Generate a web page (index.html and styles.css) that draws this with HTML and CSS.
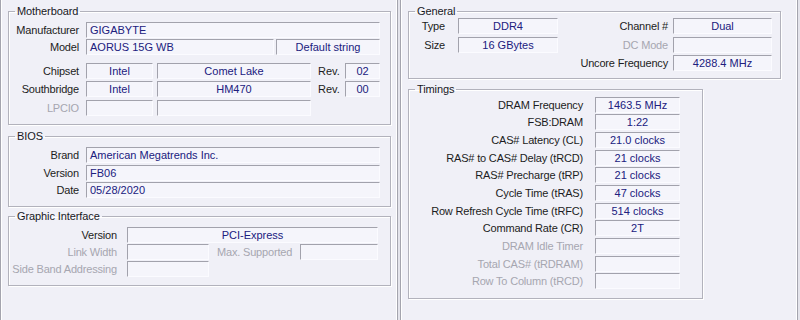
FILE: index.html
```html
<!DOCTYPE html>
<html lang="en">
<head>
  <meta charset="UTF-8">
  <title>Mainboard / Memory</title>
  <link rel="stylesheet" href="styles.css">
</head>
<body>
  <div class="screen">

    <!-- Mainboard tab -->
    <div class="window win-left">
      <fieldset class="group mb">
        <legend>Motherboard</legend>
        <div class="row">
          <span class="lbl">Manufacturer</span>
          <span class="fld txt-left" style="width:294px">GIGABYTE</span>
        </div>
        <div class="row r-model">
          <span class="lbl">Model</span>
          <span class="fld txt-left" style="width:188px">AORUS 15G WB</span>
          <span class="fld" style="width:104px;margin-left:2px">Default string</span>
        </div>
        <div class="row r-chipset">
          <span class="lbl">Chipset</span>
          <span class="fld" style="width:67px">Intel</span>
          <span class="fld" style="width:154px;margin-left:4px">Comet Lake</span>
          <span class="rev">Rev.</span>
          <span class="fld" style="width:35px">02</span>
        </div>
        <div class="row r-south">
          <span class="lbl">Southbridge</span>
          <span class="fld" style="width:67px">Intel</span>
          <span class="fld" style="width:154px;margin-left:4px">HM470</span>
          <span class="rev">Rev.</span>
          <span class="fld" style="width:35px">00</span>
        </div>
        <div class="row r-lpcio">
          <span class="lbl off">LPCIO</span>
          <span class="fld" style="width:67px"></span>
          <span class="fld" style="width:154px;margin-left:4px"></span>
        </div>
      </fieldset>

      <fieldset class="group bios">
        <legend>BIOS</legend>
        <div class="row">
          <span class="lbl">Brand</span>
          <span class="fld txt-left" style="width:294px">American Megatrends Inc.</span>
        </div>
        <div class="row r-ver">
          <span class="lbl">Version</span>
          <span class="fld txt-left" style="width:294px">FB06</span>
        </div>
        <div class="row r-date">
          <span class="lbl">Date</span>
          <span class="fld txt-left" style="width:294px">05/28/2020</span>
        </div>
      </fieldset>

      <fieldset class="group gfx">
        <legend>Graphic Interface</legend>
        <div class="row">
          <span class="lbl">Version</span>
          <span class="fld" style="width:251px">PCI-Express</span>
        </div>
        <div class="row r-next">
          <span class="lbl off">Link Width</span>
          <span class="fld" style="width:82px"></span>
          <span class="lbl off max">Max. Supported</span>
          <span class="fld" style="width:78px"></span>
        </div>
        <div class="row r-next">
          <span class="lbl off">Side Band Addressing</span>
          <span class="fld" style="width:82px"></span>
        </div>
      </fieldset>
    </div>

    <!-- Memory tab -->
    <div class="window win-right">
      <fieldset class="group general">
        <legend>General</legend>
        <div class="gen-grid">
          <span class="lbl">Type</span>
          <span class="fld">DDR4</span>
          <span class="lbl">Channel #</span>
          <span class="fld">Dual</span>

          <span class="lbl">Size</span>
          <span class="fld">16 GBytes</span>
          <span class="lbl off">DC Mode</span>
          <span class="fld"></span>

          <span class="lbl wide">Uncore Frequency</span>
          <span class="fld">4288.4 MHz</span>
        </div>
      </fieldset>

      <fieldset class="group timings">
        <legend>Timings</legend>
        <div class="tim-grid">
          <span class="lbl">DRAM Frequency</span><span class="fld">1463.5 MHz</span>
          <span class="lbl">FSB:DRAM</span><span class="fld">1:22</span>
          <span class="lbl">CAS# Latency (CL)</span><span class="fld">21.0 clocks</span>
          <span class="lbl">RAS# to CAS# Delay (tRCD)</span><span class="fld">21 clocks</span>
          <span class="lbl">RAS# Precharge (tRP)</span><span class="fld">21 clocks</span>
          <span class="lbl">Cycle Time (tRAS)</span><span class="fld">47 clocks</span>
          <span class="lbl">Row Refresh Cycle Time (tRFC)</span><span class="fld">514 clocks</span>
          <span class="lbl">Command Rate (CR)</span><span class="fld">2T</span>
          <span class="lbl off">DRAM Idle Timer</span><span class="fld"></span>
          <span class="lbl off">Total CAS# (tRDRAM)</span><span class="fld"></span>
          <span class="lbl off">Row To Column (tRCD)</span><span class="fld"></span>
        </div>
      </fieldset>
    </div>

  </div>
</body>
</html>
```

FILE: styles.css
```css
body {
  margin: 0;
  background: #e4e4ec;
  font-family: "Liberation Sans", Arial, sans-serif;
  font-size: 11px;
  color: #1c1c22;
}

.screen {
  display: flex;
  gap: 2px;
  height: 320px;
  overflow: hidden;
}

/* each tab page */
.window {
  box-sizing: border-box;
  height: 320px;
  padding: 5px 0 0 7px;
  background: #f0f0f7;
  border-left: 1px solid #a4a4ae;
  border-right: 1px solid #a4a4ae;
  box-shadow: inset 1px 0 0 #ffffff, inset -1px 0 0 #ffffff;
}

.win-left {
  width: 398px;
}

.win-right {
  width: 398px;
}

/* etched group boxes */
.group {
  margin: 0;
  min-width: 0;
  border: 1px solid #b2b2bc;
  box-shadow: 1px 1px 0 #ffffff, inset 1px 1px 0 #ffffff;
}

.group legend {
  margin-left: 6px;
  padding: 0 2px;
  line-height: 13px;
  letter-spacing: -0.1px;
  color: #18181e;
}

.row {
  display: flex;
  align-items: center;
  height: 16px;
}

.lbl {
  flex: none;
  text-align: right;
  white-space: nowrap;
  line-height: 16px;
  letter-spacing: -0.18px;
}

.off {
  color: #a6a6b0;
}

.fld {
  flex: none;
  box-sizing: border-box;
  height: 16px;
  line-height: 14px;
  padding: 0 3px;
  text-align: center;
  white-space: nowrap;
  overflow: hidden;
  color: #20207e;
  background: #f5f5fb;
  border-top: 1px solid #a2a2ac;
  border-left: 1px solid #a2a2ac;
  border-bottom: 1px solid #fbfbff;
  border-right: 1px solid #fbfbff;
}

.txt-left {
  text-align: left;
}

/* Motherboard */
.mb {
  width: 383px;
  box-sizing: border-box;
  padding: 4px 0 8px 0;
}

.mb .lbl,
.bios .lbl {
  width: 70px;
  margin-right: 7px;
}

.r-model { margin-top: 1px; }
.r-chipset { margin-top: 8px; }
.r-south { margin-top: 2px; }
.r-lpcio { margin-top: 3px; }

.rev {
  width: 22px;
  margin: 0 5px 0 7px;
  line-height: 16px;
}

/* BIOS */
.bios {
  width: 383px;
  box-sizing: border-box;
  margin-top: 5px;
  padding: 4px 0 8px 0;
}

.r-ver { margin-top: 2px; }
.r-date { margin-top: 1px; }

/* Graphic Interface */
.gfx {
  width: 383px;
  box-sizing: border-box;
  margin-top: 3px;
  padding: 4px 0 8px 0;
}

.gfx .lbl {
  width: 108px;
  margin-right: 10px;
}

.gfx .lbl.max {
  width: 76px;
  margin: 0 7px 0 8px;
  text-align: left;
}

.r-next { margin-top: 1px; }

/* General */
.general {
  width: 373px;
  box-sizing: border-box;
  padding: 0 0 7px 0;
}

.gen-grid {
  display: grid;
  grid-template-columns: 49px 100px 115px 99px;
  row-gap: 2.5px;
}

.gen-grid .lbl {
  padding-right: 5px;
}

.gen-grid .lbl:nth-child(4n+1) {
  padding-right: 13px;
}

.gen-grid .lbl.wide {
  grid-column: 1 / 4;
  padding-right: 5px;
}

/* Timings */
.timings {
  width: 295px;
  box-sizing: border-box;
  margin-top: 4px;
  padding: 0.5px 0 9px 0;
}

.tim-grid {
  display: grid;
  grid-template-columns: 174px 85px;
  column-gap: 12px;
  row-gap: 1.7px;
}
```
